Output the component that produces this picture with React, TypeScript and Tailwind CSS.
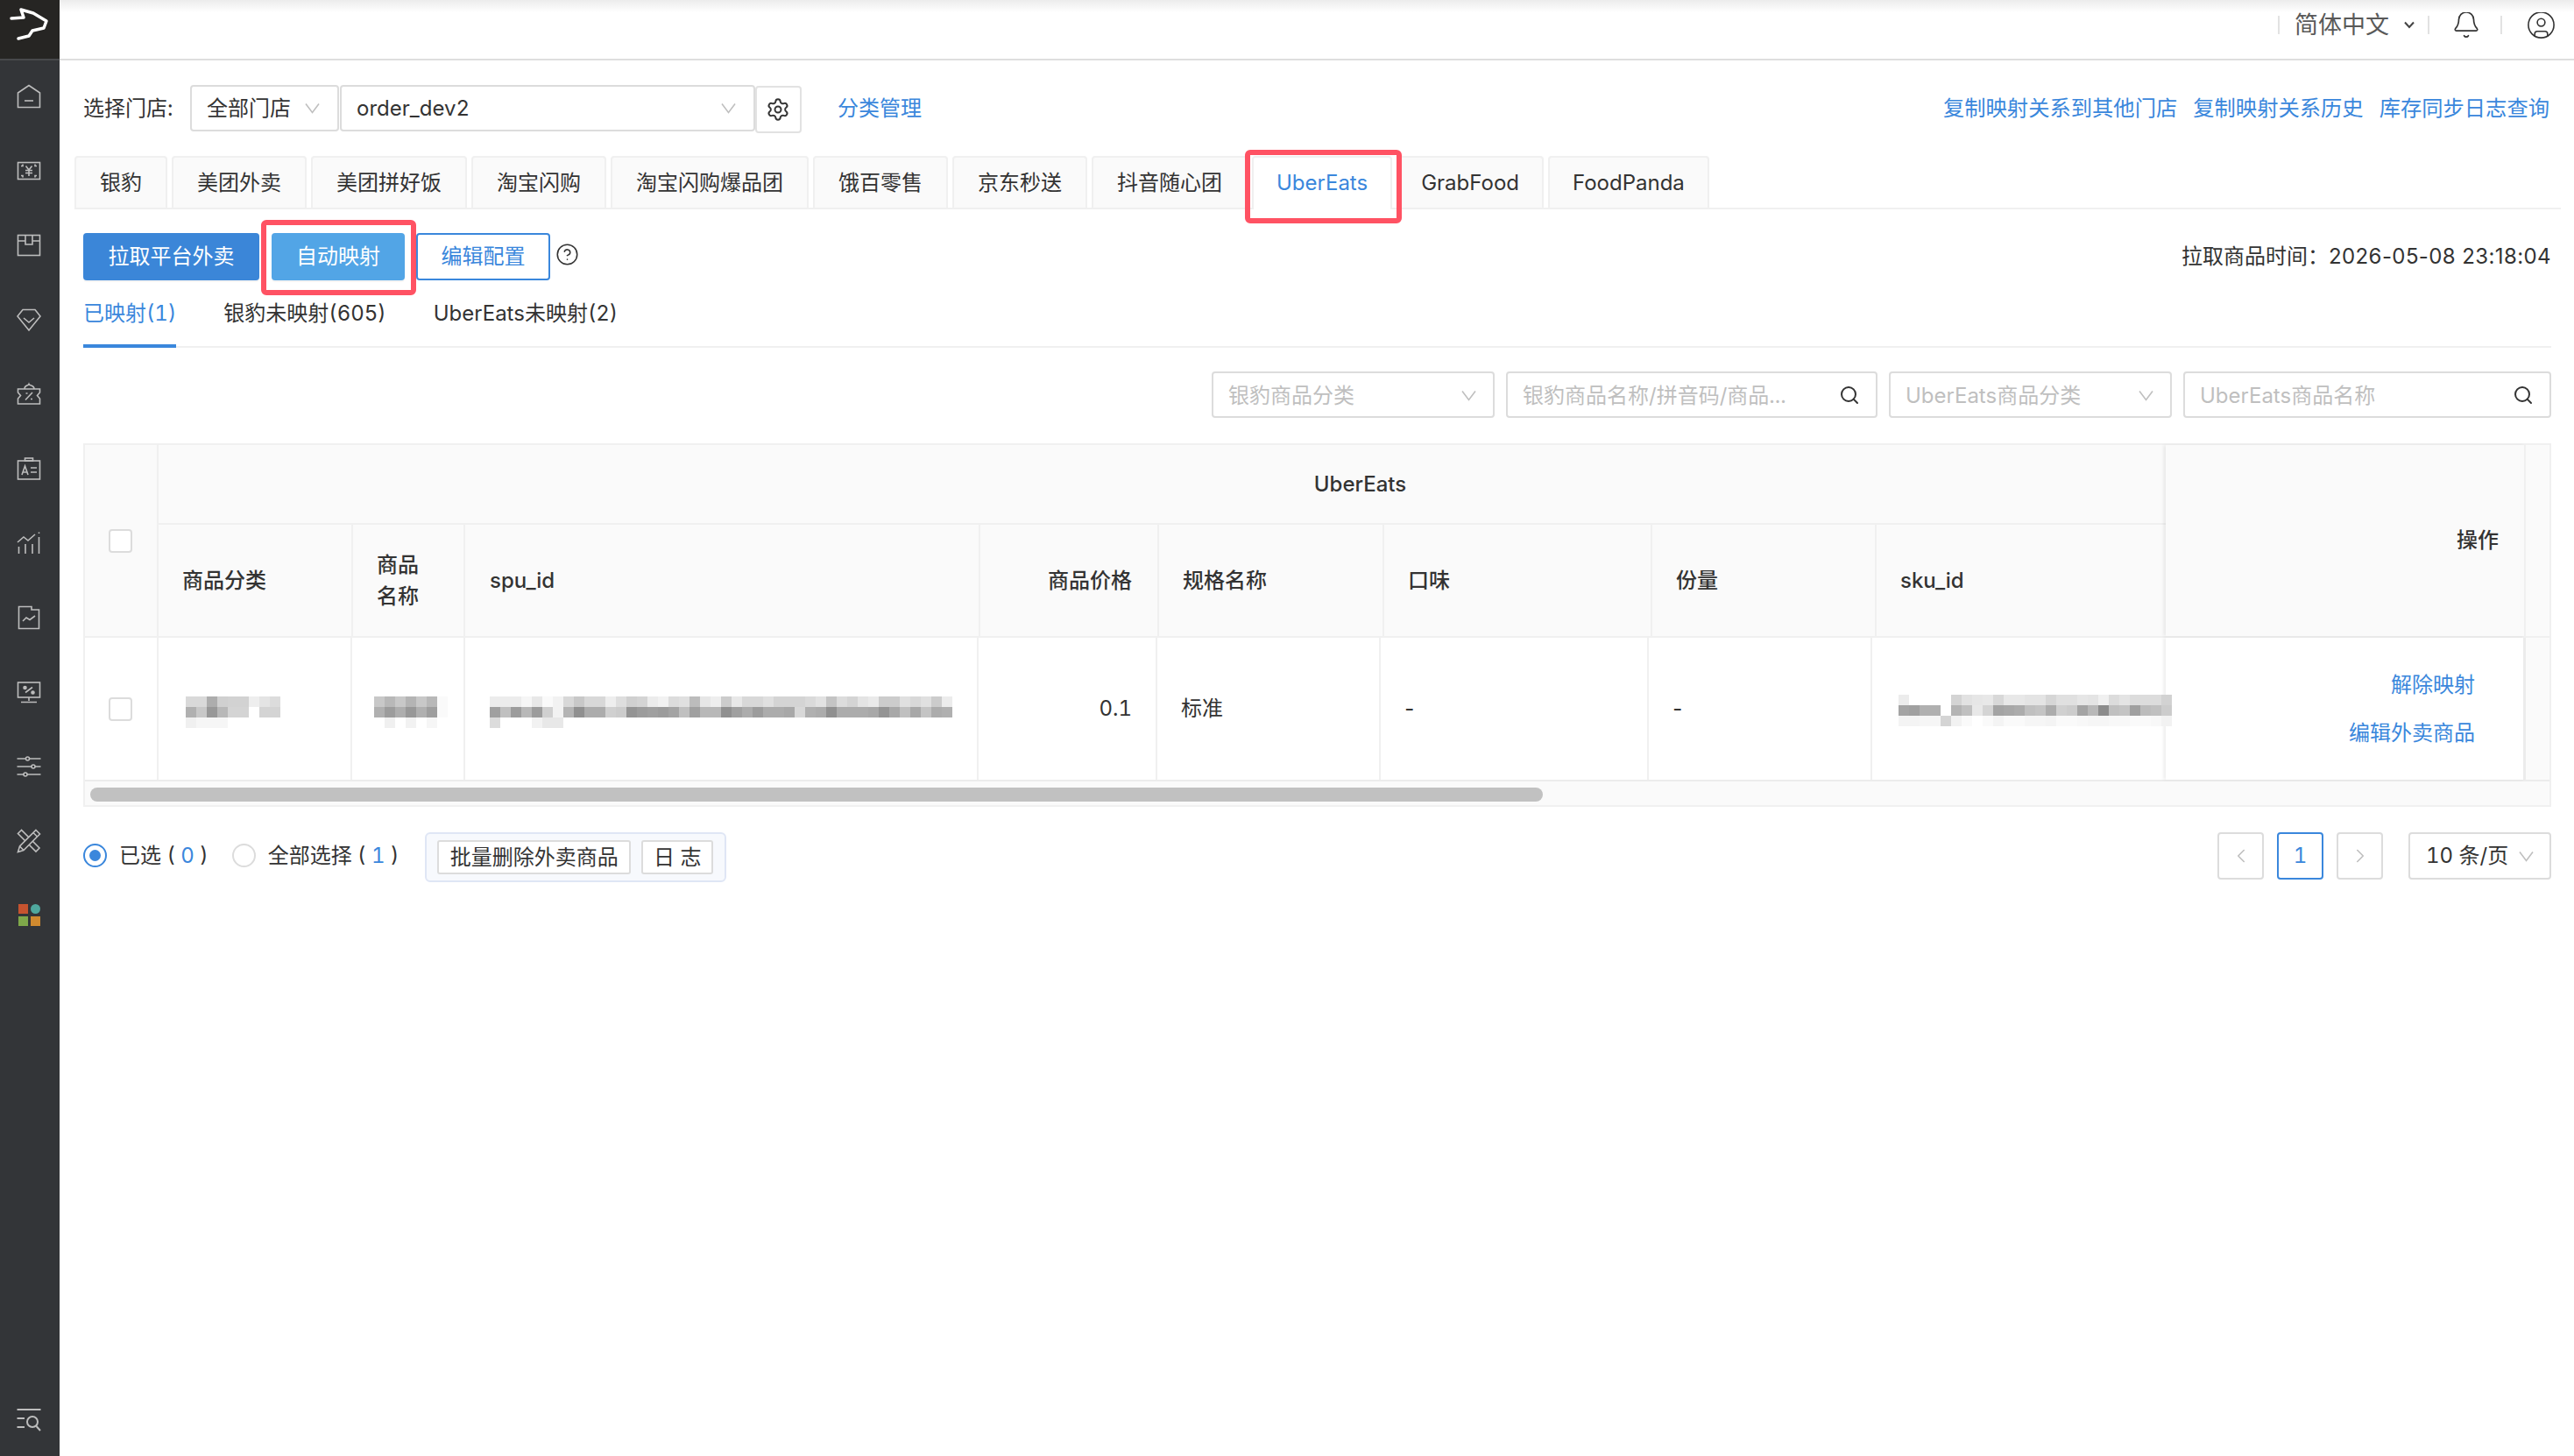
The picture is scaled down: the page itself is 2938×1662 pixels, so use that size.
import { ReactNode } from "react";
import { Bell, ChevronLeft, ChevronRight, CircleHelp, CircleUser, Search, Settings } from "lucide-react";

const tabs = [
  "银豹",
  "美团外卖",
  "美团拼好饭",
  "淘宝闪购",
  "淘宝闪购爆品团",
  "饿百零售",
  "京东秒送",
  "抖音随心团",
  "UberEats",
  "GrabFood",
  "FoodPanda",
];

const mosaics = {
  category: ["d9 d9 ad d0 d2 d2 ee e4 dc", "b0 c8 98 b8 d4 d4 ff d4 d4", "f0 f6 f6 f6 ff ff ff ff ff"],
  name: ["c8 b8 c8 b4 c8 b8 fa", "b0 9c ae 98 b0 9e fa", "ff f0 ff f2 ff f6 ff"],
  spu: [
    "ec ec ec f6 e8 fa f2 d8 c8 d8 d8 ee de d0 d4 ec f2 dc e0 bc e6 ee cc e8 d8 d8 e0 d4 d4 d4 da e2 c4 dc d4 e4 ea cc cc e0 d8 e0 cc ec",
    "a0 c0 9c b8 9c d0 f2 b4 90 ac ac d0 cc 94 9c a0 9c a4 c0 a0 b8 b8 90 a0 ac 9c ac ac a8 d8 b0 ac 90 ac ac ac a8 94 a8 c0 a8 c4 ac b0",
    "dc ff ff ff f2 e8 e8 ff ff ff ff ff ff ff ff ff ff ff ff ff ff ff ff ff ff ff ff ff ff ff ff ff ff ff ff ff ff ff ff ff ff ff ff ff",
  ],
  sku: [
    "ec ff ff ff ff d4 e2 e6 e8 d8 e8 e8 e4 e4 d6 e0 e0 e6 e4 f0 dc e4 dc dc dc d2",
    "a4 a0 b0 b0 ff b4 c0 e8 d4 a4 a8 ac c0 c4 ac d0 cc a4 b8 8c c0 c4 a0 bc c0 cc",
    "f4 f4 f6 f6 d4 f2 fa ff fa f4 fa fa f6 f6 f4 fa fa f8 f6 f6 f8 f8 fa fa f8 f2",
  ],
};

// pixelated values from the screenshot, one rect per 12px block
const Mosaic = ({ rows }: { rows: string[] }) => {
  const cols = rows[0].split(" ").length;
  return (
    <svg width={cols * 12} height={36} shapeRendering="crispEdges" className="block shrink-0">
      {rows.map((row, y) =>
        row.split(" ").map((v, x) => (
          <rect key={`${x}-${y}`} x={x * 12} y={y * 12} width={12} height={12} fill={`#${v}${v}${v}`} />
        ))
      )}
    </svg>
  );
};

const Chevron = ({ className = "text-[#bfbfbf]" }: { className?: string }) => (
  <svg width="17" height="13" viewBox="0 0 17 13" fill="none" stroke="currentColor" strokeWidth="1.6" className={`shrink-0 ${className}`}>
    <path d="M1 1.5 8.5 11.5 16 1.5" />
  </svg>
);

const NavIcon = ({ children }: { children: ReactNode }) => (
  <div className="h-[85px] flex items-center justify-center pr-[2px]">
    <svg width="28" height="28" viewBox="0 0 28 28" fill="none" stroke="#bdbdbd" strokeWidth="1.6">
      {children}
    </svg>
  </div>
);

const Sidebar = () => (
  <aside className="w-[68px] shrink-0 bg-[#333538] flex flex-col">
    <div className="h-[69px] bg-[#262523] border-b-2 border-[#48494b] shrink-0">
      <svg width="68" height="67" viewBox="0 0 68 67" fill="none" stroke="#fff" strokeWidth="3.5" strokeLinejoin="round" strokeLinecap="round">
        <path d="M13 21 27 20 24 11 38 15 53 24 50 32 37 35 33 41 21 44" />
      </svg>
    </div>
    <div className="-mt-[2px] flex flex-col">
      <NavIcon>
        <path d="M1.5 26.5V10L14 1.5 26.5 10V26.5Z" />
        <path d="M9 19H19" />
      </NavIcon>
      <NavIcon>
        <rect x="1.5" y="4.5" width="25" height="19" />
        <path d="M5 8.5H7V6.5M23 8.5H21V6.5M5 19.5H7V21.5M23 19.5H21V21.5" />
        <path d="M10.5 8.5 14 13 17.5 8.5M10 13.5H18M10 16.5H18M14 13V20" />
      </NavIcon>
      <NavIcon>
        <rect x="1.5" y="2.5" width="25" height="23" />
        <path d="M1.5 9H10M18 9H26.5M10 2.5V13H18V2.5" />
      </NavIcon>
      <NavIcon>
        <path d="M7 2.5H21L27 10 14 26 1 10Z" />
        <path d="M8 12 14 17 20 12" />
      </NavIcon>
      <NavIcon>
        <path d="M1.5 8H26.5V12L23.5 15.5 26.5 19V25H1.5V19L4.5 15.5 1.5 12Z" />
        <path d="M9 8C9 3 13 5 14 2.5 15 5 20 3 20 8" />
        <path d="M10 20.5 18 12M10.5 13H12.5M16 19.5H18" />
      </NavIcon>
      <NavIcon>
        <rect x="1.5" y="5" width="25" height="21" />
        <rect x="9.5" y="2" width="9" height="3" />
        <path d="M6 21 9.5 11 13 21M7 18H12M16 13H23M16 18H23" />
      </NavIcon>
      <NavIcon>
        <path d="M1 13 8 7 13 11 21 4" />
        <path d="M2.5 26V18M10 26V15M18 26V15M25.5 26V7M25.5 3V1.5" />
      </NavIcon>
      <NavIcon>
        <path d="M2.5 1.5H17V5H25.5V26.5H2.5Z" />
        <path d="M7 18 11 14 15 16.5 21 12" />
      </NavIcon>
      <NavIcon>
        <rect x="1.5" y="3" width="25" height="17" />
        <path d="M14 20V24M5 25.5H23M10 14.5 18 8.5" />
        <circle cx="9.5" cy="9" r="1.5" fill="#bdbdbd" />
        <circle cx="18.5" cy="14.5" r="1.5" fill="#bdbdbd" />
      </NavIcon>
      <NavIcon>
        <path d="M0.5 5H10.5M14.5 5H27.5M0.5 14H17M21 14H27.5M0.5 23H8M12 23H27.5" />
        <circle cx="12.5" cy="5" r="2" />
        <circle cx="19" cy="14" r="2" />
        <circle cx="10" cy="23" r="2" />
      </NavIcon>
      <NavIcon>
        <path d="M5.5 1.5 1.5 5.5 22 26 26 22Z" />
        <path d="M22 1.5 26.5 6 8 24.5 1.5 26.5 3.5 20Z" fill="#333538" />
        <path d="M3.5 20 8 24.5M19 4.5 23.5 9" />
      </NavIcon>
      <div className="h-[85px] flex items-center justify-center pr-[2px]">
        <div className="grid grid-cols-2 gap-[3px]">
          <div className="w-[11px] h-[11px] bg-[#c6532f]" />
          <div className="w-[11px] h-[11px] rounded-full bg-[#4fa89e]" />
          <div className="w-[11px] h-[11px] bg-[#7fa84a]" />
          <div className="w-[11px] h-[11px] bg-[#d08a2f]" />
        </div>
      </div>
    </div>
    <div className="mt-auto h-[84px] flex items-center justify-center pr-[2px]">
      <svg width="28" height="27" viewBox="0 0 28 27" fill="none" stroke="#bdbdbd" strokeWidth="2">
        <path d="M0.5 2H27.5M0.5 12H9M0.5 22H9" />
        <circle cx="18" cy="16" r="6" />
        <path d="M22.5 21 27 26" />
      </svg>
    </div>
  </aside>
);

const Topbar = () => (
  <header className="relative h-[69px] shrink-0 border-b-2 border-[#dedede] pb-[11px] pr-[20px] flex items-center justify-end text-[#595959]">
    <div className="absolute inset-x-0 top-0 h-[14px] bg-gradient-to-b from-[#ececec] to-white" />
    <div className="w-[2px] h-[21px] bg-[#e2e2e2]" />
    <span className="relative ml-[17px] text-[27px] leading-none">简体中文</span>
    <svg width="14" height="9" viewBox="0 0 14 9" fill="none" stroke="#444" strokeWidth="2" className="ml-[16px]">
      <path d="M2 1.5 7 7 12 1.5" />
    </svg>
    <div className="w-[2px] h-[21px] bg-[#e2e2e2] ml-[14px]" />
    <Bell size={34} strokeWidth={1.2} className="text-[#333] ml-[25px]" />
    <div className="w-[2px] h-[21px] bg-[#e2e2e2] ml-[22px]" />
    <CircleUser size={35} strokeWidth={1.1} className="text-[#333] ml-[27px]" />
  </header>
);

const TopFilters = () => (
  <div className="mt-[28px] h-[53px] flex items-center text-[24px]">
    <span className="w-[122px] shrink-0 text-[#333]">选择门店:</span>
    <div className="w-[170px] h-[53px] border-2 border-[#dcdcdc] rounded-[4px] pl-[17px] pr-[20px] flex items-center justify-between text-[#333]">
      全部门店
      <Chevron />
    </div>
    <div className="ml-[1px] w-[474px] h-[53px] border-2 border-[#dcdcdc] rounded-[4px] pl-[17px] pr-[20px] flex items-center justify-between text-[#333]">
      order_dev2
      <Chevron />
    </div>
    <div className="w-[53px] h-[54px] mt-[2px] border-2 border-[#e2e2e2] rounded-[4px] flex items-center justify-center">
      <Settings size={28} strokeWidth={1.7} className="text-[#333] -ml-[2px]" />
    </div>
    <a className="ml-[41px] text-[#3a87dc]">分类管理</a>
    <div className="ml-auto pr-[2px] flex gap-[18px] text-[24.3px] text-[#3a87dc]">
      <a>复制映射关系到其他门店</a>
      <a>复制映射关系历史</a>
      <a>库存同步日志查询</a>
    </div>
  </div>
);

const PlatformTabs = () => (
  <div className="mt-[28px] -ml-[10px] -mr-[11px] h-[61px] border-b-2 border-[#f0f0f0] flex gap-[5px] text-[24px]">
    {tabs.map((tab) =>
      tab === "UberEats" ? (
        <div key={tab} className="relative h-[61px] px-[26px] pb-[2px] flex items-center bg-white border-2 border-b-0 border-[#f0f0f0] rounded-t-[4px] text-[#3a87dc]">
          {tab}
          <div className="absolute -left-[10px] -right-[13px] -top-[9px] -bottom-[16px] border-[6px] border-[#ff5263] rounded-[6px]" />
        </div>
      ) : (
        <div key={tab} className={`h-[59px] flex items-center bg-[#fafafa] border-2 border-b-0 border-[#f0f0f0] rounded-t-[4px] text-[#333] ${tab === "GrabFood" || tab === "FoodPanda" ? "px-[26px]" : "px-[27px]"}`}>
          {tab}
        </div>
      )
    )}
  </div>
);

const Actions = () => (
  <div className="mt-[27px] h-[54px] flex items-center text-[24px]">
    <button className="w-[201px] h-[54px] rounded-[4px] bg-[#3b86d8] text-white shadow-[0_2px_0_rgba(0,0,0,0.04)]">拉取平台外卖</button>
    <div className="relative ml-[14px]">
      <button className="block w-[152px] h-[54px] rounded-[4px] bg-[#52a5e6] text-white shadow-[0_2px_0_rgba(0,0,0,0.04)]">自动映射</button>
      <div className="absolute -left-[12px] -right-[13px] -top-[15px] -bottom-[17px] border-[6px] border-[#ff5263] rounded-[6px]" />
    </div>
    <button className="ml-[13px] w-[153px] h-[54px] rounded-[4px] bg-white border-2 border-[#3a87dc] text-[#3a87dc]">编辑配置</button>
    <CircleHelp size={27} strokeWidth={1.4} className="ml-[6px] -mt-[5px] text-[#333]" />
    <span className="ml-auto text-[#333]">
      拉取商品时间：<span className="normal-nums tracking-[0.4px]">2026-05-08 23:18:04</span>
    </span>
  </div>
);

const SubTabs = () => (
  <div className="mt-[20px] h-[57px] border-b-2 border-[#f0f0f0] flex gap-[54px] text-[24px] leading-[36px] text-[#333]">
    <div className="h-[57px] border-b-4 border-[#3a87dc] text-[#3a87dc]">已映射(1)</div>
    <div>银豹未映射(605)</div>
    <div>UberEats未映射(2)</div>
  </div>
);

const Filter = ({ width, placeholder, icon }: { width: string; placeholder: string; icon: "select" | "search" }) => (
  <div className={`${width} h-[53px] border-2 border-[#dcdcdc] rounded-[4px] pl-[17px] pt-[2px] flex items-center justify-between text-[#bfbfbf] ${icon === "select" ? "pr-[19px]" : "pr-[18px]"}`}>
    <span className="whitespace-nowrap">{placeholder}</span>
    {icon === "select" ? <Chevron /> : <Search size={24} strokeWidth={2} className="text-[#333] shrink-0 -mt-[2px]" />}
  </div>
);

const Filters = () => (
  <div className="mt-[27px] flex justify-end gap-[13px] text-[24px]">
    <Filter width="w-[323px]" placeholder="银豹商品分类" icon="select" />
    <Filter width="w-[424px]" placeholder="银豹商品名称/拼音码/商品..." icon="search" />
    <Filter width="w-[323px]" placeholder="UberEats商品分类" icon="select" />
    <Filter width="w-[420px]" placeholder="UberEats商品名称" icon="search" />
  </div>
);

const Checkbox = () => <div className="w-[27px] h-[27px] bg-white border-2 border-[#dcdcdc] rounded-[4px]" />;

const Table = () => (
  <div className="mt-[29px] border-2 border-[#f0f0f0] bg-[#fafafa] text-[24px] text-[#333]">
    {/* header */}
    <div className="flex h-[220px] border-b-2 border-[#f0f0f0]">
      <div className="w-[84px] shrink-0 border-r-2 border-[#f0f0f0] flex items-center justify-center pr-[2px]">
        <Checkbox />
      </div>
      <div className="w-[2291px] shrink-0 flex flex-col">
        <div className="h-[91px] border-b-2 border-[#f0f0f0] flex items-center justify-center font-medium pl-[452px]">UberEats</div>
        <div className="flex flex-1 font-medium">
          <div className="w-[222px] border-r-2 border-[#f0f0f0] pl-[27px] flex items-center">商品分类</div>
          <div className="w-[128px] border-r-2 border-[#f0f0f0] pl-[27px] flex items-center leading-[36px]">商品<br />名称</div>
          <div className="w-[588px] border-r-2 border-[#f0f0f0] pl-[28px] flex items-center">spu_id</div>
          <div className="w-[204px] border-r-2 border-[#f0f0f0] pr-[29px] flex items-center justify-end">商品价格</div>
          <div className="w-[257px] border-r-2 border-[#f0f0f0] pl-[27px] flex items-center">规格名称</div>
          <div className="w-[306px] border-r-2 border-[#f0f0f0] pl-[27px] flex items-center">口味</div>
          <div className="w-[256px] border-r-2 border-[#f0f0f0] pl-[27px] flex items-center">份量</div>
          <div className="flex-1 pl-[27px] flex items-center">sku_id</div>
        </div>
      </div>
      <div className="relative z-[1] w-[411px] shrink-0 border-r-2 border-[#f0f0f0] bg-[#fafafa] shadow-[-3px_0_3px_rgba(0,0,0,0.06)] pr-[29px] flex items-center justify-end font-medium">
        操作
      </div>
    </div>
    {/* row */}
    <div className="flex h-[164px] border-b-2 border-[#ececec]">
      <div className="flex flex-1 bg-white">
        <div className="w-[84px] shrink-0 border-r-2 border-[#f0f0f0] flex items-center justify-center pr-[2px]">
          <Checkbox />
        </div>
        <div className="w-[221px] border-r-2 border-[#f0f0f0] pl-[31px] pt-[8px] flex items-center"><Mosaic rows={mosaics.category} /></div>
        <div className="w-[129px] border-r-2 border-[#f0f0f0] pl-[25px] pt-[8px] flex items-center"><Mosaic rows={mosaics.name} /></div>
        <div className="w-[586px] border-r-2 border-[#f0f0f0] pl-[28px] pt-[8px] flex items-center"><Mosaic rows={mosaics.spu} /></div>
        <div className="w-[204px] border-r-2 border-[#f0f0f0] pr-[27px] flex items-center justify-end">0.1</div>
        <div className="w-[255px] border-r-2 border-[#f0f0f0] pl-[27px] flex items-center">标准</div>
        <div className="w-[306px] border-r-2 border-[#f0f0f0] pl-[25px] flex items-center">-</div>
        <div className="w-[255px] border-r-2 border-[#f0f0f0] pl-[25px] flex items-center">-</div>
        <div className="relative z-[2] w-[335px] pl-[30px] pt-[4px] flex items-center"><Mosaic rows={mosaics.sku} /></div>
      </div>
      <div className="relative z-[1] w-[411px] shrink-0 border-r-[3px] border-[#ececec] bg-white shadow-[-3px_0_3px_rgba(0,0,0,0.06)] pr-[55px] pt-[1px] flex flex-col items-end justify-center gap-[19px] leading-[36px] text-[#3a87dc]">
        <a>解除映射</a>
        <a>编辑外卖商品</a>
      </div>
      <div className="w-[27px] shrink-0" />
    </div>
    {/* scrollbar */}
    <div className="h-[27px] pl-[6px] pt-[7px]">
      <div className="w-[1658px] h-[16px] rounded-full bg-[#c1c1c1]" />
    </div>
  </div>
);

const Radio = ({ checked }: { checked?: boolean }) => (
  <div className={`w-[27px] h-[27px] rounded-full border-2 bg-white flex items-center justify-center ${checked ? "border-[#3a87dc]" : "border-[#dcdcdc]"}`}>
    {checked && <div className="w-[13px] h-[13px] rounded-full bg-[#3a87dc]" />}
  </div>
);

const PageButton = ({ children, active }: { children: ReactNode; active?: boolean }) => (
  <div className={`w-[53px] h-[54px] border-2 rounded-[4px] flex items-center justify-center ${active ? "border-[#3a87dc] text-[#3a87dc]" : "border-[#dcdcdc] text-[#bfbfbf]"}`}>
    {children}
  </div>
);

const Footer = () => (
  <div className="mt-[29px] flex justify-between items-start text-[24px] text-[#333]">
    <div className="flex items-start">
      <div className="h-[53px] flex items-center">
        <Radio checked />
        <span className="ml-[14px] whitespace-pre">已选 ( <span className="text-[#3a87dc]">0</span> )</span>
      </div>
      <div className="h-[53px] ml-[27px] flex items-center">
        <Radio />
        <span className="ml-[14px] whitespace-pre">全部选择 ( <span className="text-[#3a87dc]">1</span> )</span>
      </div>
      <div className="ml-[30px] h-[57px] pl-[12px] pr-[13px] border-2 border-[#dfe6f5] rounded-[6px] bg-[#f7f9fd] flex items-center gap-[12px]">
        <div className="h-[39px] w-[221px] bg-white border-2 border-[#dcdcdc] rounded-[3px] flex items-center justify-center">批量删除外卖商品</div>
        <div className="h-[39px] w-[82px] bg-white border-2 border-[#dcdcdc] rounded-[3px] flex items-center justify-center">日 志</div>
      </div>
    </div>
    <div className="flex gap-[15px]">
      <PageButton><ChevronLeft size={26} strokeWidth={1.5} /></PageButton>
      <PageButton active>1</PageButton>
      <PageButton><ChevronRight size={26} strokeWidth={1.5} /></PageButton>
      <div className="ml-[14px] w-[163px] h-[54px] border-2 border-[#dcdcdc] rounded-[4px] pl-[18px] pr-[18px] flex items-center justify-between">
        10 条/页
        <Chevron />
      </div>
    </div>
  </div>
);

export default function App() {
  return (
    <div className="flex h-screen bg-white [font-family:Inter,'Noto_Sans_CJK_SC',sans-serif] tabular-nums overflow-hidden">
      <Sidebar />
      <div className="flex-1 min-w-0 flex flex-col">
        <Topbar />
        <main className="flex-1 pl-[27px] pr-[26px]">
          <TopFilters />
          <PlatformTabs />
          <Actions />
          <SubTabs />
          <Filters />
          <Table />
          <Footer />
        </main>
      </div>
    </div>
  );
}
